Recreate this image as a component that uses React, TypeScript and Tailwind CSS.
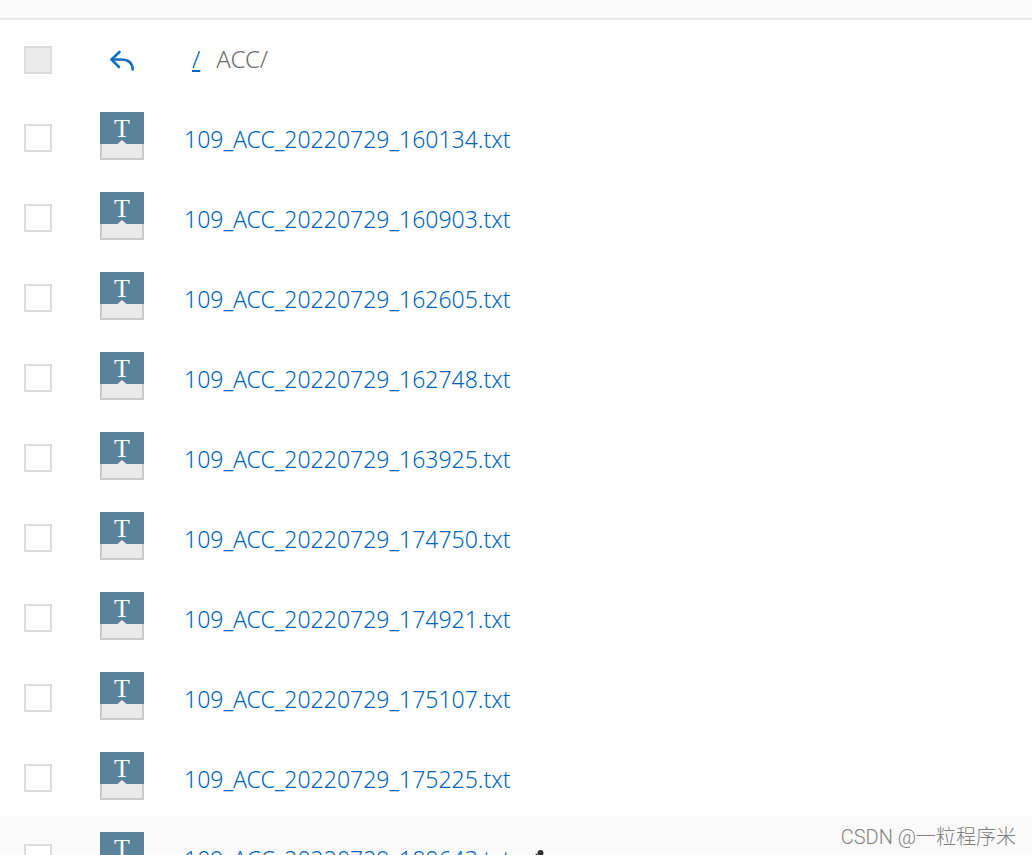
import React from "react";

const files: string[] = [
  "109_ACC_20220729_160134.txt",
  "109_ACC_20220729_160903.txt",
  "109_ACC_20220729_162605.txt",
  "109_ACC_20220729_162748.txt",
  "109_ACC_20220729_163925.txt",
  "109_ACC_20220729_174750.txt",
  "109_ACC_20220729_174921.txt",
  "109_ACC_20220729_175107.txt",
  "109_ACC_20220729_175225.txt",
  "109_ACC_20220729_180643.txt",
];

function TextFileIcon() {
  return (
    <svg className="block h-12 w-11 shrink-0" viewBox="0 0 44 48" aria-hidden="true">
      <rect width="44" height="48" fill="#c8cacb" />
      <rect x="2" y="28" width="40" height="18" fill="#eaeaea" />
      <path d="M0 0H44V32H26.5L22 28L17.5 32H0Z" fill="#5b829b" />
      <text
        x="22"
        y="25"
        textAnchor="middle"
        fill="#f6fdff"
        className="font-['Liberation_Serif',serif] text-[26px] font-normal"
      >
        T
      </text>
    </svg>
  );
}

function ReplyIcon() {
  return (
    <svg
      className="block h-6 w-7"
      viewBox="0 0 28 24"
      fill="none"
      stroke="#1270c0"
      strokeWidth="2.6"
      strokeLinecap="round"
      strokeLinejoin="round"
      aria-hidden="true"
    >
      <path d="M11.5 4L3.5 11.5L11 19" />
      <path d="M4 11.5H13C20.5 11.5 24.5 15 24.7 21.5" />
    </svg>
  );
}

function PencilIcon() {
  return (
    <svg className="block size-5" viewBox="0 0 20 20" aria-hidden="true">
      <path d="M1 19L2.5 12.5L9.5 5.5L14 10L7.5 17.5Z" fill="#333" />
      <circle cx="13.5" cy="5" r="3" fill="#333" />
    </svg>
  );
}

function Tick({ label, disabled = false }: { label: string; disabled?: boolean }) {
  return (
    <input
      type="checkbox"
      aria-label={label}
      disabled={disabled}
      className="block size-7 shrink-0 appearance-none border-2 border-[#dcdcdc] bg-white checked:bg-[#1270c0] disabled:bg-[#eaeaea]"
    />
  );
}

function FileRow({ name, active }: { name: string; active: boolean }) {
  return (
    <li className={active ? "flex h-20 items-center bg-[#fafafa] px-6" : "flex h-20 items-center px-6"}>
      <div className="w-19 shrink-0 pt-1">
        <Tick label={`Select ${name}`} />
      </div>
      <TextFileIcon />
      <a href={`#${name}`} className="ml-10 pt-1.5 text-[#0066bd] hover:underline">
        {name}
      </a>
      {active && (
        <button type="button" aria-label={`Rename ${name}`} className="ml-4 pt-1">
          <PencilIcon />
        </button>
      )}
    </li>
  );
}

export default function App() {
  return (
    <main className="relative h-screen overflow-hidden bg-white font-['Noto_Sans','Open_Sans',sans-serif] text-[23px] leading-8 font-light">
      <div className="h-5 border-b-2 border-[#e9e9e9] bg-[#fafafa]" />
      <header className="flex h-19 items-center px-6 pt-1">
        <div className="w-19 shrink-0">
          <Tick label="Select all" disabled />
        </div>
        <div className="flex w-11 shrink-0 justify-center">
          <button type="button" aria-label="Up one folder">
            <ReplyIcon />
          </button>
        </div>
        <nav aria-label="Path" className="ml-12 flex gap-4 pb-0.5 text-[24px]">
          <a href="#root" className="text-[#0066bd] underline decoration-2 underline-offset-2">
            /
          </a>
          <span className="text-[#6f6f6f]">ACC/</span>
        </nav>
      </header>
      <ul>
        {files.map((name, index) => (
          <FileRow key={name} name={name} active={index === files.length - 1} />
        ))}
      </ul>
      <p className="absolute right-4 bottom-1 font-['Roboto','Noto_Sans_CJK_SC',sans-serif] text-[20px] leading-7 text-[#808080]">
        CSDN @一粒程序米
      </p>
    </main>
  );
}
